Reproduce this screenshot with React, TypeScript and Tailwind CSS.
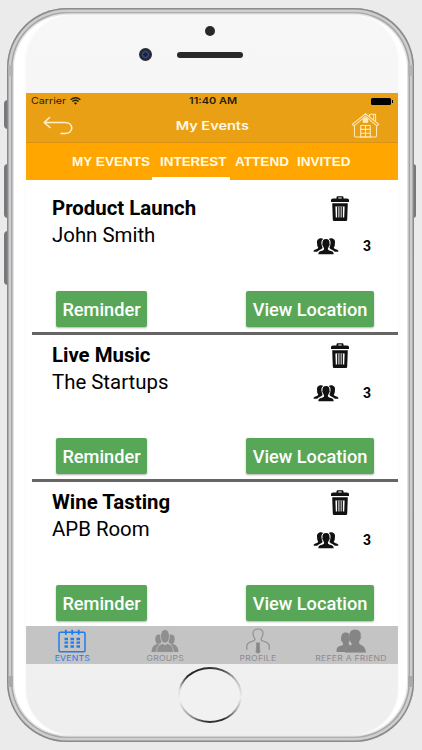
import type { ReactNode } from "react"

interface EventItem {
  title: string
  host: string
  guests: number
}

const events: EventItem[] = [
  { title: "Product Launch", host: "John Smith", guests: 3 },
  { title: "Live Music", host: "The Startups", guests: 3 },
  { title: "Wine Tasting", host: "APB Room", guests: 3 },
]

function BackIcon() {
  return (
    <svg width="30" height="20" viewBox="0 0 30 20" fill="none" stroke="#fff1cf" strokeWidth="1.6" strokeLinecap="round" strokeLinejoin="round">
      <path d="M6.5 1.5 1.2 6.5 7 11.5M1.5 6.5H22c9 0 9 11 0 11h-4" />
    </svg>
  )
}

function HomeIcon() {
  return (
    <svg width="29" height="25" viewBox="0 0 30 26" fill="none" stroke="#ffe9b8" strokeWidth="1.1" strokeLinejoin="round">
      <path d="M3.5 13.5v10q0 1.500 1.500 1.500h20q1.500 0 1.500-1.500v-10" />
      <path d="M3.200 13.300 15 3.200l11.800 10.100 2-1.500L15 .8 1.200 11.800z" />
      <path d="M19.300 4V1.200h6.200v8M23.500 1.500v6" />
      <path d="M10 13h10v12H10zM15 13v12M10 17h10M10 21h10" />
      <path d="M12.700 9.500V7.500a2.300 2.300 0 0 1 4.600 0v2z" fill="#ffe9b8" />
    </svg>
  )
}

function TrashIcon() {
  return (
    <svg width="20" height="26" viewBox="0 0 20 26" fill="#111">
      <path d="M6.500 2.500v-1Q6.500.3 7.700.3h4.600q1.200 0 1.200 1.200v1H17q2 0 2 1.500v2H1V4q0-1.500 2-1.500zM8.300 2.500h3.400v-.9H8.300z" />
      <path fillRule="evenodd" d="M2.200 7.200h15.600l-.6 16.600q-.1 1.200-1.200 1.200H4q-1.100 0-1.200-1.200zM5.400 10.500l.4 11h8.400l.4-11z" />
      <path d="M7.100 10.500h1.300v12H7.100zM9.400 10.500h1.300v12H9.400zM11.600 10.500h1.300v12h-1.300z" />
    </svg>
  )
}

function GuestsIcon() {
  return (
    <svg width="26" height="17" viewBox="0 0 26 17" fill="#111">
      <path d="M6 .8c1.500-.8 3.300-.6 4.200.3C8 2.500 8.200 5 8.800 7.500c.4 1 .8 1.300.6 2.700-1.500 1.800-3.900 1.800-5.200 3.500H.7Q.2 12.300 1.800 11.700c2-.8 3.400-1 3.400-2.200C4 8 4.300 6.800 4.100 5.500 3.700 3.200 4.200 1.500 6 .8z" />
      <path d="M20 .8c-1.500-.8-3.300-.6-4.200.3 2.200 1.400 2 3.900 1.400 6.400-.4 1-.8 1.300-.6 2.700 1.500 1.800 3.900 1.800 5.200 3.500h3.500q.5-1.400-1.100-2c-2-.8-3.400-1-3.400-2.200 1.200-1.500.9-2.700 1.100-4 .4-2.300-.1-4-1.900-4.700z" />
      <path d="M13 1c2.700 0 3.900 1.900 3.500 4.600.6.700.1 2.200-.6 2.600-.3 1.200-1 1.600-1 2.800 0 1.300 1.600 1.500 3.300 2.100 1.600.6 2.400 1.200 2.500 3.100H5.300c.1-1.900.9-2.500 2.500-3.100 1.700-.6 3.300-.8 3.300-2.100 0-1.200-.7-1.600-1-2.800-.7-.4-1.200-1.900-.6-2.600C9.100 2.900 10.300 1 13 1z" />
    </svg>
  )
}

function CalendarIcon() {
  return (
    <svg width="28" height="24" viewBox="0 0 28 24" fill="none" stroke="#1f7cea" strokeWidth="1.500">
      <rect x="1" y="3.200" width="26" height="19.500" rx="1.200" />
      <path d="M7.800.7v5M14.200.7v5M20.700.7v5" strokeWidth="1.800" />
      <path d="M6.500 10h15.500M6.500 13.700h15.500M6.500 17.500h15.500" strokeWidth="2.300" strokeDasharray="3.500 2.500" />
    </svg>
  )
}

function GroupsIcon() {
  return (
    <svg width="28" height="24" viewBox="0 0 28 24" fill="#8f8f8f">
      <ellipse cx="7.600" cy="10.300" rx="3.300" ry="4.700" />
      <ellipse cx="20.400" cy="10.300" rx="3.300" ry="4.700" />
      <path d="M.5 23c0-4.500 2.500-7.500 6-8l3 1 9 0 3-1c3.500.5 6 3.500 6 8z" />
      <ellipse cx="14" cy="7.300" rx="4.500" ry="6.900" stroke="#c4c4c4" strokeWidth=".8" />
      <path d="M5.500 23.300c.2-5.300 2.500-7.800 6-8.800l2.500 1.300 2.500-1.300c3.500 1 5.800 3.500 6 8.800z" stroke="#c4c4c4" strokeWidth=".8" />
    </svg>
  )
}

function ProfileIcon() {
  return (
    <svg width="24" height="26" viewBox="0 0 24 26" fill="none" stroke="#919191" strokeWidth="1.200">
      <path d="M.8 22v-4c0-2.500 1-3 3.500-4 3.500-1 5.200-1.300 4.500-3.500C7.300 8.500 7 7 7 5.500 7 2.500 9 1 12 1s5 1.500 5 4.500c0 1.500-.3 3-1.800 5-.7 2.200 1 2.500 4.500 3.500 2.500 1 3.500 1.500 3.500 4v4" />
      <path d="M10.500 15h3l-.3 2 .6 7-1.800 1-1.800-1 .6-7z" fill="#858585" />
    </svg>
  )
}

function ReferIcon() {
  return (
    <svg width="30" height="24" viewBox="0 0 30 24" fill="#858585">
      <path d="M9.500 3.500c3 0 5 2 4.500 5.500.5 1 .2 2-.5 3-.8 1.500-1 2-.5 3.500l6 3.500v4H.5c0-4 .8-5.200 3.500-6 2.500-.7 3.500-1.200 3-3-1.500-1.300-2-2.500-2-4 .1-4.200 1.500-6.500 4.500-6.500z" />
      <path d="M19 .8c4.500 0 6.200 2.500 5.700 6.500.6 1 .2 2.500-.8 3.500-.5 1.500-1.200 2-.8 3.700.5 1.800 6.500 1.500 6.700 9H9c0-3.500.6-5 3.500-6 2-.8 3.500-1 3.200-3-1-.8-1.600-2-1.800-3.700-.8-.5-1.200-2-.5-3.200C13 3.500 15 .8 19 .8z" stroke="#9c9c9c" strokeWidth=".4" />
    </svg>
  )
}

function WifiIcon() {
  return (
    <svg width="11" height="8" viewBox="0 0 11 8" fill="none" stroke="#2a1d05" strokeWidth="1.300">
      <path d="M.6 2.700Q5.500-1.200 10.400 2.700M2.400 4.500Q5.500 2 8.600 4.500" />
      <path d="M4 6 5.500 7.500 7 6Q5.500 4.900 4 6z" fill="#2a1d05" strokeWidth=".3" />
    </svg>
  )
}

function EventRow({ event }: { event: EventItem }) {
  return (
    <div className="ml-[6px] h-[147px] border-b-[3px] border-[#656565] pl-5 pr-6">
      <div className="flex h-[103px] justify-between">
        <div className="pt-[7px] text-[20.400px] leading-[27px] text-black">
          <h2 className="font-bold">{event.title}</h2>
          <p>{event.host}</p>
        </div>
        <div className="w-[61px] pt-[8px]">
          <div className="flex h-[26px] pl-[17px]"><TrashIcon /></div>
          <div className="mt-[15px] flex h-[18px] items-center justify-between pr-[3px]">
            <GuestsIcon />
            <span className="text-[14px] font-bold leading-[18px]">{event.guests}</span>
          </div>
        </div>
      </div>
      <div className="flex justify-between pl-1">
        <button className="h-[36px] w-[91px] rounded-[2px] bg-[#58a758] pt-[1px] text-[18.200px] font-medium text-white shadow-[0_1px_2px_rgba(0,0,0,0.3)]">Reminder</button>
        <button className="h-[36px] w-[128px] whitespace-nowrap rounded-[2px] bg-[#58a758] pt-[1px] text-[18.200px] font-medium text-white shadow-[0_1px_2px_rgba(0,0,0,0.3)]">View Location</button>
      </div>
    </div>
  )
}

function BottomTab({ icon, label, active }: { icon: ReactNode; label: string; active?: boolean }) {
  return (
    <div className={`flex w-[93px] flex-col items-center pr-[1px] ${active ? "text-[#1f7cea]" : "text-[#8c8c8c]"}`}>
      <div className="flex h-[29px] items-center">{icon}</div>
      <span className="scale-x-[1.15] whitespace-nowrap font-['Inter',sans-serif] text-[7.500px] leading-[8px] tracking-[0.2px]">{label}</span>
    </div>
  )
}

export default function App() {
  return (
    <div className="relative h-[750px] w-[422px] overflow-hidden bg-[#ebebeb] px-[7px] pt-[8px] font-['Roboto',sans-serif]">
      {/* side keys */}
      <div className="absolute left-[4px] top-[100px] h-[29px] w-[4px] rounded-l-sm bg-[#77777c]" />
      <div className="absolute left-[4px] top-[164px] h-[54px] w-[4px] rounded-l-sm bg-[#77777c]" />
      <div className="absolute left-[4px] top-[231px] h-[54px] w-[4px] rounded-l-sm bg-[#77777c]" />
      <div className="absolute left-[413px] top-[164px] h-[54px] w-[3px] rounded-r-sm bg-[#77777c]" />

      <div className="relative h-[734px] w-[407px] overflow-hidden rounded-[60px] bg-white p-[7px] shadow-[inset_0_0_0_1.5px_#8a8a8a,inset_0_0_0_4px_#cecece,inset_0_0_0_5.5px_#a5a5a8,inset_0_0_0_7px_#e2e2e2]">
        {/* antenna bands */}
        <div className="absolute left-[1px] top-[57px] h-[11px] w-[5px] bg-[#b4b4b4]" />
        <div className="absolute right-[1px] top-[57px] h-[11px] w-[5px] bg-[#b4b4b4]" />
        <div className="absolute bottom-[55px] left-[1px] h-[11px] w-[5px] bg-[#a9a9a9]" />
        <div className="absolute bottom-[55px] right-[1px] h-[11px] w-[5px] bg-[#a9a9a9]" />

        <div className="ml-[12px] h-[720px] w-[372px] rounded-[46px] bg-gradient-to-b from-[#f7f7f7] to-[#efefef] shadow-[0_0_4px_#f7f7f7]">
          <div className="flex h-[78px] flex-col items-center pt-[11px]">
            <div className="mr-[4px] size-[10px] rounded-full bg-[#29282b]" />
            <div className="mt-[12px] flex w-full items-center pl-[113px]">
              <div className="flex size-[13px] items-center justify-center rounded-full bg-[#272a35]">
                <div className="size-[7px] rounded-full border border-[#476091] bg-[#122451]" />
              </div>
              <div className="ml-[25px] h-[6px] w-[66px] rounded-full bg-[#29282b]" />
            </div>
          </div>

          <div className="h-[571px] w-[372px] overflow-hidden bg-white">
            <header className="h-[50px] border-b border-[#d99212] bg-[#e9a015] font-['Inter',sans-serif]">
              <div className="flex h-[16px] items-center pl-[5px] pr-[5px] text-[9px] text-[#2a1d05]">
                <span className="w-[39px]"><span className="inline-block origin-left scale-x-[1.19]">Carrier</span></span>
                <WifiIcon />
                <span className="ml-[108px] w-[50px]"><span className="inline-block origin-left scale-x-[1.220] whitespace-nowrap font-semibold">11:40 AM</span></span>
                <span className="ml-auto h-[7px] w-[20px] rounded-[1.500px] bg-black" />
                <span className="ml-[1px] h-[3px] w-[1px] bg-black" />
              </div>
              <div className="flex h-[33px] items-center pl-[17px] pr-[18px]">
                <BackIcon />
                <h1 className="flex-1 text-center text-[12px] font-semibold text-[#fff8e8]"><span className="inline-block scale-x-[1.210]">My Events</span></h1>
                <HomeIcon />
              </div>
            </header>

            <nav className="flex h-[37px] bg-[#ffa600] pl-[46px] font-['Liberation_Sans',sans-serif] text-[12px] font-bold leading-[38px] text-[#fffae8]">
              <div className="w-[80px]"><span className="inline-block origin-left scale-x-[1.130] whitespace-nowrap">MY EVENTS</span></div>
              <div className="w-[78px] border-b-[3px] border-white pl-[8px]"><span className="inline-block origin-left scale-x-[1.120]">INTEREST</span></div>
              <div className="w-[67px] pl-[5px]"><span className="inline-block origin-left scale-x-[1.130]">ATTEND</span></div>
              <div><span className="inline-block origin-left scale-x-[1.130]">INVITED</span></div>
            </nav>

            <main className="h-[446px] overflow-hidden pt-[8px]">
              {events.map((event) => <EventRow key={event.title} event={event} />)}
            </main>

            <footer className="flex h-[38px] bg-[#c4c4c4]">
              <BottomTab icon={<CalendarIcon />} label="EVENTS" active />
              <BottomTab icon={<GroupsIcon />} label="GROUPS" />
              <BottomTab icon={<ProfileIcon />} label="PROFILE" />
              <BottomTab icon={<ReferIcon />} label="REFER A FRIEND" />
            </footer>
          </div>

          <div className="ml-[152px] mt-[3px] h-[56px] w-[64px] rounded-[50%] bg-[conic-gradient(#333,#555_30deg,#bbb_60deg,#eee_95deg,#aaa_120deg,#28282f_150deg,#333_190deg,#aaa_230deg,#f2f2f2_260deg,#ddd_280deg,#222_310deg,#333)] p-[2px]">
            <div className="h-full w-full rounded-[50%] bg-[#f1f1f1]" />
          </div>
        </div>
      </div>
    </div>
  )
}
